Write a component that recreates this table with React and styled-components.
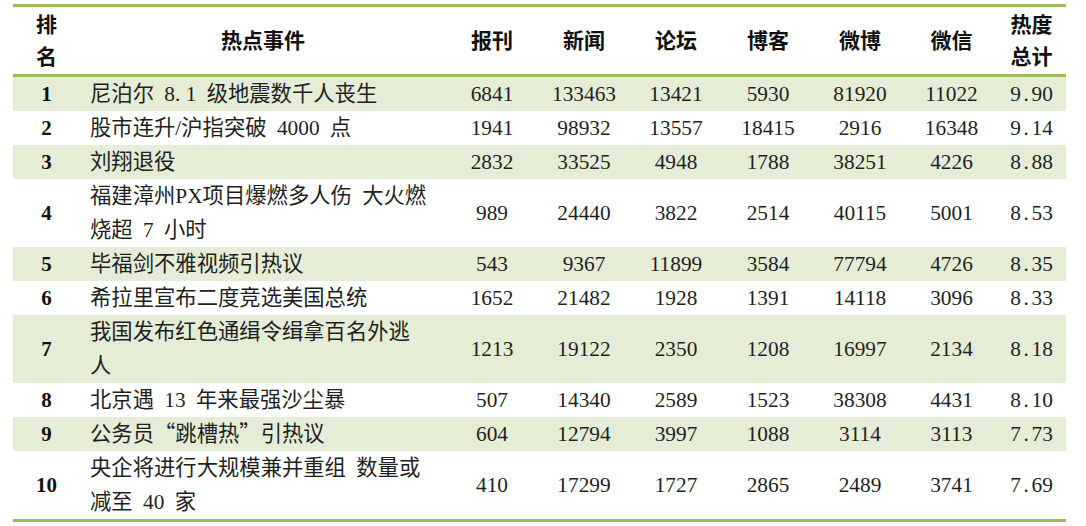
import React from 'react';
import styled, { createGlobalStyle } from 'styled-components';

const GlobalStyle = createGlobalStyle`
  html, body {
    margin: 0;
    padding: 0;
    background: #fff;
  }
`

const Page = styled.div`
  padding: 4px 20px 0 13px;
  font-family: "Liberation Serif", "Noto Sans CJK SC", serif;
`

const Table = styled.table`
  width: 1053px;
  table-layout: fixed;
  border-collapse: collapse;
  border-top: 3px solid #9bbb59;
  border-bottom: 3px solid #9bbb59;
  color: #1f1f1f;
  font-size: 21.33px;
`

const HeadRow = styled.tr`
  border-bottom: 3px solid #9bbb59;
`

const HeadCell = styled.th`
  width: ${p => p.$w}px;
  height: 67px;
  padding: 0;
  line-height: 32px;
  font-family: "Liberation Sans", "Noto Sans CJK SC", sans-serif;
  font-size: 21px;
  font-weight: bold;
  color: #111;
  text-align: center;
  vertical-align: middle;
`

const Row = styled.tr`
  background: ${p => (p.$shaded ? '#e5edd6' : '#fff')};
`

const RankCell = styled.td`
  padding: 0;
  line-height: 34px;
  text-align: center;
  font-size: 21px;
  font-weight: bold;
  color: #111;
`

const EventCell = styled.td`
  padding: 0 0 0 10px;
  line-height: 34px;
  white-space: nowrap;
  word-spacing: 5px;
`

// curly quotes sit in a full-width box in the original
const Quote = styled.span`
  display: inline-block;
  width: 1em;
  line-height: 1;
  text-align: ${p => (p.$open ? 'right' : 'left')};
  font-family: "Noto Sans CJK SC", sans-serif;
`

// the decimal point takes a whole half-width cell, as in the source font
const Dot = styled.span`
  display: inline-block;
  width: 0.5em;
  line-height: 1;
`

const NumCell = styled.td`
  padding: 0;
  line-height: 34px;
  text-align: center;
  white-space: nowrap;
`

const columns = [
  { label: ['排', '名'], w: 67 },
  { label: ['热点事件'], w: 366 },
  { label: ['报刊'], w: 92 },
  { label: ['新闻'], w: 92 },
  { label: ['论坛'], w: 92 },
  { label: ['博客'], w: 92 },
  { label: ['微博'], w: 92 },
  { label: ['微信'], w: 91 },
  { label: ['热度', '总计'], w: 69 },
]

const rows = [
  [[<>尼泊尔 8<Dot>.</Dot>1 级地震数千人丧生</>], 6841, 133463, 13421, 5930, 81920, 11022, '9.90'],
  [['股市连升/沪指突破 4000 点'], 1941, 98932, 13557, 18415, 2916, 16348, '9.14'],
  [['刘翔退役'], 2832, 33525, 4948, 1788, 38251, 4226, '8.88'],
  [['福建漳州PX项目爆燃多人伤 大火燃', '烧超 7 小时'], 989, 24440, 3822, 2514, 40115, 5001, '8.53'],
  [['毕福剑不雅视频引热议'], 543, 9367, 11899, 3584, 77794, 4726, '8.35'],
  [['希拉里宣布二度竞选美国总统'], 1652, 21482, 1928, 1391, 14118, 3096, '8.33'],
  [['我国发布红色通缉令缉拿百名外逃', '人'], 1213, 19122, 2350, 1208, 16997, 2134, '8.18'],
  [['北京遇 13 年来最强沙尘暴'], 507, 14340, 2589, 1523, 38308, 4431, '8.10'],
  [[<>公务员<Quote $open>“</Quote>跳槽热<Quote>”</Quote>引热议</>], 604, 12794, 3997, 1088, 3114, 3113, '7.73'],
  [['央企将进行大规模兼并重组 数量或', '减至 40 家'], 410, 17299, 1727, 2865, 2489, 3741, '7.69'],
]

const Lines = ({ parts }) => parts.map((t, i) => (
  <React.Fragment key={i}>
    {i > 0 && <br />}
    {t}
  </React.Fragment>
))

const Score = ({ value }) => {
  const [whole, frac] = value.split('.')
  return <>{whole}<Dot>.</Dot>{frac}</>
}

export default function App() {
  return (
    <Page>
      <GlobalStyle />
      <Table>
        <thead>
          <HeadRow>
            {columns.map((c, i) => (
              <HeadCell key={i} $w={c.w}><Lines parts={c.label} /></HeadCell>
            ))}
          </HeadRow>
        </thead>
        <tbody>
          {rows.map(([event, ...nums], i) => {
            const score = nums.pop()
            return (
              <Row key={i} $shaded={i % 2 === 0}>
                <RankCell>{i + 1}</RankCell>
                <EventCell><Lines parts={event} /></EventCell>
                {nums.map((n, j) => <NumCell key={j}>{n}</NumCell>)}
                <NumCell><Score value={score} /></NumCell>
              </Row>
            )
          })}
        </tbody>
      </Table>
    </Page>
  )
}
